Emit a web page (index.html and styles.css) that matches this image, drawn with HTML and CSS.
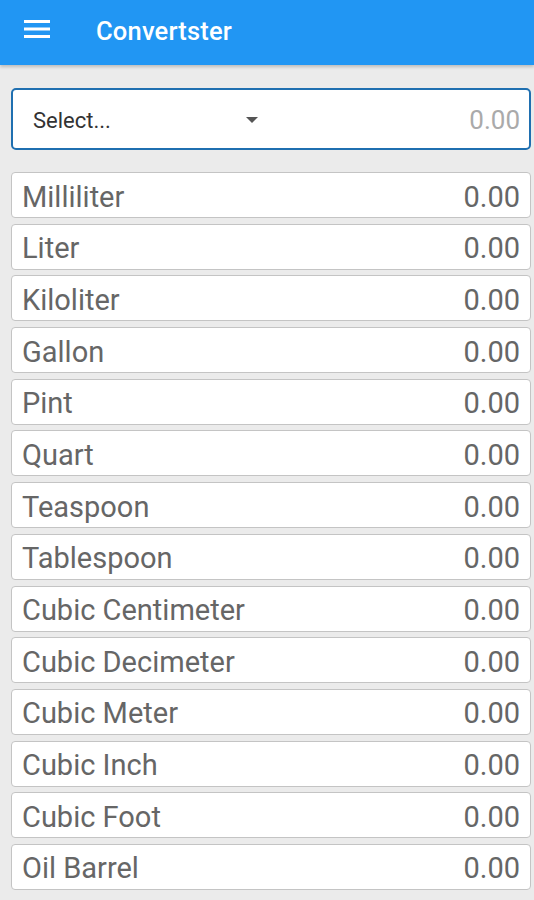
FILE: index.html
```html
<!DOCTYPE html>
<html>
<head>
<meta charset="utf-8">
<link rel="stylesheet" href="styles.css">
</head>
<body>
<header class="appbar">
  <svg class="menu" width="26" height="18" viewBox="0 0 26 18"><rect x="0" y="0" width="26" height="3" fill="#fff"/><rect x="0" y="7.5" width="26" height="3" fill="#fff"/><rect x="0" y="15" width="26" height="3" fill="#fff"/></svg>
  <span class="title">Convertster</span>
</header>
<main class="content">
  <div class="select">
    <span class="select-label">Select...</span>
    <span class="caret"></span>
    <span class="select-value">0.00</span>
  </div>
  <div class="list">
    <div class="row"><span>Milliliter</span><span>0.00</span></div>
    <div class="row"><span>Liter</span><span>0.00</span></div>
    <div class="row"><span>Kiloliter</span><span>0.00</span></div>
    <div class="row"><span>Gallon</span><span>0.00</span></div>
    <div class="row"><span>Pint</span><span>0.00</span></div>
    <div class="row"><span>Quart</span><span>0.00</span></div>
    <div class="row"><span>Teaspoon</span><span>0.00</span></div>
    <div class="row"><span>Tablespoon</span><span>0.00</span></div>
    <div class="row"><span>Cubic Centimeter</span><span>0.00</span></div>
    <div class="row"><span>Cubic Decimeter</span><span>0.00</span></div>
    <div class="row"><span>Cubic Meter</span><span>0.00</span></div>
    <div class="row"><span>Cubic Inch</span><span>0.00</span></div>
    <div class="row"><span>Cubic Foot</span><span>0.00</span></div>
    <div class="row"><span>Oil Barrel</span><span>0.00</span></div>
  </div>
</main>
</body>
</html>
```
FILE: styles.css
```css
html, body {
  margin: 0;
  padding: 0;
  background: #ebebeb;
  font-family: Roboto, "Noto Sans", sans-serif;
  height: 900px;
  overflow: hidden;
}
.appbar {
  height: 65px;
  background: #2196f3;
  display: flex;
  align-items: center;
  box-shadow: 0 2px 3px rgba(0,0,0,0.2);
  position: relative;
}
.menu {
  margin-left: 24px;
  margin-bottom: 7px;
}
.title {
  margin-left: 46px;
  margin-bottom: 4px;
  color: #fff;
  font-size: 25.5px;
  font-weight: 500;
  letter-spacing: 0.2px;
}
.content {
  padding: 23px 3px 0 11px;
}
.select {
  box-sizing: border-box;
  height: 62px;
  background: #fff;
  border: 2px solid #1f6fb0;
  border-radius: 5px;
  display: flex;
  align-items: center;
  padding: 2px 9px 0 20px;
}
.select-label {
  font-size: 22px;
  color: #333;
  width: 213px;
}
.caret {
  width: 0;
  height: 0;
  border-left: 6px solid transparent;
  border-right: 6px solid transparent;
  border-top: 6px solid #555;
}
.select-value {
  margin-left: auto;
  font-size: 26px;
  color: #aaa;
}
.list {
  margin-top: 22px;
  display: flex;
  flex-direction: column;
  gap: 5.7px;
}
.row {
  box-sizing: border-box;
  height: 46px;
  background: #fff;
  border: 1px solid #c4c4c4;
  border-radius: 4px;
  display: flex;
  align-items: center;
  justify-content: space-between;
  padding: 3px 10px 0 10px;
  font-size: 29px;
  color: #666;
}
```
